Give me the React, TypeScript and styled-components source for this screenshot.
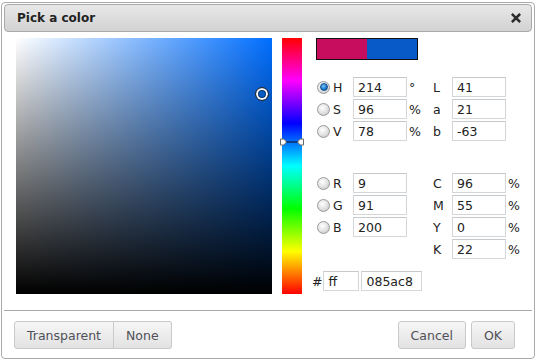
import React from 'react'
import styled, { createGlobalStyle } from 'styled-components'

const GlobalStyle = createGlobalStyle`
  body {
    margin: 0;
    background: #ffffff;
    font-family: "DejaVu Sans", Verdana, sans-serif;
  }
`

const Dialog = styled.div`
  box-sizing: border-box;
  width: 534px;
  height: 357px;
  margin: 2px 0 0 1px;
  padding: 1px 2px;
  border: 1px solid #aaaaaa;
  border-radius: 4px;
  background: #ffffff;
  display: flex;
  flex-direction: column;
`

const TitleBar = styled.div`
  box-sizing: border-box;
  height: 28px;
  padding: 0 10px 0 12px;
  border: 1px solid #aaaaaa;
  border-radius: 4px;
  background: linear-gradient(#e8e8e8, #d2d2d2);
  display: flex;
  align-items: center;
  justify-content: space-between;
`

const Title = styled.span`
  font-size: 12px;
  font-weight: bold;
  color: #222222;
`

const CloseButton = styled.span`
  display: flex;
  width: 10px;
  height: 10px;
`

const Body = styled.div`
  box-sizing: border-box;
  height: 278px;
  padding: 6px 0 0 12px;
  display: flex;
  align-items: flex-start;
`

const SVArea = styled.div<{ $hue: number }>`
  position: relative;
  width: 256px;
  height: 256px;
  background:
    linear-gradient(to top, #000000, rgba(0, 0, 0, 0)),
    linear-gradient(to right, #ffffff, hsl(${(p) => p.$hue}, 100%, 50%));
`

const SVMarker = styled.div`
  position: absolute;
  box-sizing: border-box;
  width: 14px;
  height: 14px;
  border-radius: 50%;
  border: 1px solid #2a2a2a;
  box-shadow: inset 0 0 0 2px #ffffff, inset 0 0 0 3px rgba(0, 0, 0, 0.45);
`

const HueBar = styled.div`
  position: relative;
  width: 20px;
  height: 256px;
  margin-left: 10px;
  background: linear-gradient(
    to bottom,
    #ff0000 0%,
    #ff00ff 16.67%,
    #0000ff 33.33%,
    #00ffff 50%,
    #00ff00 66.67%,
    #ffff00 83.33%,
    #ff0000 100%
  );
`

const HueMarker = styled.svg`
  position: absolute;
  left: -2px;
`

const Panel = styled.div`
  margin-left: 14px;
  display: flex;
  flex-direction: column;
`

const Preview = styled.div`
  display: flex;
  width: 100px;
  height: 20px;
  border: 1px solid #111111;
`

const Swatch = styled.div<{ $color: string }>`
  flex: 1;
  background: ${(p) => p.$color};
`

const FieldGrid = styled.div<{ $top: number }>`
  display: grid;
  grid-template-columns: 15px 22px 54px 24px 21px 54px auto;
  grid-auto-rows: 20px;
  row-gap: 2px;
  align-items: center;
  margin-top: ${(p) => p.$top}px;
  font-size: 12.5px;
  color: #222222;
`

const Radio = styled.span<{ $checked?: boolean }>`
  box-sizing: border-box;
  width: 13px;
  height: 13px;
  margin-left: 1px;
  border-radius: 50%;
  border: 1px solid #9a9a9a;
  background: radial-gradient(circle at 40% 35%, #ffffff 0%, #e6e6e6 45%, #bdbdbd 100%);
  display: flex;
  align-items: center;
  justify-content: center;

  &::after {
    content: '';
    display: ${(p) => (p.$checked ? 'block' : 'none')};
    width: 6px;
    height: 6px;
    border-radius: 50%;
    border: 1px solid #0d4f8f;
    background: radial-gradient(circle at 40% 35%, #7cc4f5 0%, #1a78c8 60%, #0d5aa0 100%);
  }
`

const Label = styled.span<{ $col?: number }>`
  padding-left: 2px;
  ${(p) => (p.$col ? `grid-column: ${p.$col};` : '')}
`

const Unit = styled.span`
  padding-left: 2px;
`

const Field = styled.input`
  box-sizing: border-box;
  width: 54px;
  height: 20px;
  margin: 0;
  padding: 0 4px;
  border: 1px solid #d4d7da;
  border-top-color: #c6c9cc;
  font-family: "DejaVu Sans", Verdana, sans-serif;
  font-size: 12.5px;
  color: #222222;
  background: #ffffff;
  outline: none;
`

const HexRow = styled.div`
  display: flex;
  align-items: center;
  margin: 12px 0 0 -4px;
  font-size: 12.5px;
  color: #222222;
`

const HexField = styled(Field)<{ $w: number; $gap: number }>`
  width: ${(p) => p.$w}px;
  margin-left: ${(p) => p.$gap}px;
`

const Footer = styled.div`
  flex: 1;
  border-top: 1px solid #aaaaaa;
  padding: 10px 17px 0 10px;
  display: flex;
  justify-content: space-between;
  align-items: flex-start;
`

const ButtonGroup = styled.div`
  display: flex;
  gap: 5px;
`

const Button = styled.button<{ $joined?: 'left' | 'right' }>`
  box-sizing: border-box;
  height: 28px;
  padding: 0 12px;
  border: 1px solid #c9c9c9;
  border-radius: ${(p) =>
    p.$joined === 'left' ? '3px 0 0 3px' : p.$joined === 'right' ? '0 3px 3px 0' : '3px'};
  ${(p) => (p.$joined === 'right' ? 'border-left: none;' : '')}
  background: linear-gradient(#f6f6f6, #e2e2e2);
  font-family: "DejaVu Sans", Verdana, sans-serif;
  font-size: 12.5px;
  color: #505058;
  cursor: pointer;
`

const JoinedGroup = styled.div`
  display: flex;
`

type Row = { key: string; value: string; unit?: string; checked?: boolean }

const hsv: Row[] = [
  { key: 'H', value: '214', unit: '°', checked: true },
  { key: 'S', value: '96', unit: '%' },
  { key: 'V', value: '78', unit: '%' },
]
const lab: Row[] = [
  { key: 'L', value: '41' },
  { key: 'a', value: '21' },
  { key: 'b', value: '-63' },
]
const rgb: Row[] = [
  { key: 'R', value: '9' },
  { key: 'G', value: '91' },
  { key: 'B', value: '200' },
]
const cmyk: Row[] = [
  { key: 'C', value: '96', unit: '%' },
  { key: 'M', value: '55', unit: '%' },
  { key: 'Y', value: '0', unit: '%' },
  { key: 'K', value: '22', unit: '%' },
]

const renderRows = (left: Row[], right: Row[]) => {
  const n = Math.max(left.length, right.length)
  const out: React.ReactNode[] = []
  for (let i = 0; i < n; i++) {
    const l = left[i]
    const r = right[i]
    if (l) {
      out.push(<Radio key={`r${i}`} $checked={l.checked} />)
      out.push(<Label key={`l${i}`}>{l.key}</Label>)
      out.push(<Field key={`f${i}`} defaultValue={l.value} />)
      out.push(<Unit key={`u${i}`}>{l.unit || ''}</Unit>)
    }
    if (r) {
      out.push(<Label key={`rl${i}`} $col={l ? undefined : 5}>{r.key}</Label>)
      out.push(<Field key={`rf${i}`} defaultValue={r.value} />)
      out.push(<Unit key={`ru${i}`}>{r.unit || ''}</Unit>)
    }
  }
  return out
}

const App = () => {
  const hue = 214
  const sat = 0.96
  const val = 0.78
  const markerTop = Math.round(((360 - hue) / 360) * 256)

  return (
    <>
      <GlobalStyle />
      <Dialog>
        <TitleBar>
          <Title>Pick a color</Title>
          <CloseButton>
            <svg width="10" height="10" viewBox="0 0 10 10">
              <path d="M1.8 1.8 L8.2 8.2 M8.2 1.8 L1.8 8.2" stroke="#2b2b2b" strokeWidth="2.6" strokeLinecap="square" />
            </svg>
          </CloseButton>
        </TitleBar>
        <Body>
          <SVArea $hue={hue}>
            <SVMarker style={{ left: sat * 256 - 7, top: (1 - val) * 256 - 7 }} />
          </SVArea>
          <HueBar>
            <HueMarker width="24" height="8" viewBox="0 0 24 8" style={{ top: markerTop - 4 }}>
              <path d="M0.5 1 H4 L6.5 4 L4 7 H0.5 Z" fill="#ffffff" stroke="#6a6a6a" strokeWidth="1" />
              <path d="M23.5 1 H20 L17.5 4 L20 7 H23.5 Z" fill="#ffffff" stroke="#6a6a6a" strokeWidth="1" />
              <line x1="6.5" y1="4" x2="17.5" y2="4" stroke="#111111" strokeWidth="1" />
            </HueMarker>
          </HueBar>
          <Panel>
            <Preview>
              <Swatch $color="#c70d5e" />
              <Swatch $color="#085ac8" />
            </Preview>
            <FieldGrid $top={17}>{renderRows(hsv, lab)}</FieldGrid>
            <FieldGrid $top={32}>{renderRows(rgb, cmyk)}</FieldGrid>
            <HexRow>
              #
              <HexField $w={36} $gap={1} defaultValue="ff" />
              <HexField $w={61} $gap={2} defaultValue="085ac8" />
            </HexRow>
          </Panel>
        </Body>
        <Footer>
          <JoinedGroup>
            <Button $joined="left">Transparent</Button>
            <Button $joined="right">None</Button>
          </JoinedGroup>
          <ButtonGroup>
            <Button>Cancel</Button>
            <Button>OK</Button>
          </ButtonGroup>
        </Footer>
      </Dialog>
    </>
  )
}

export default App
